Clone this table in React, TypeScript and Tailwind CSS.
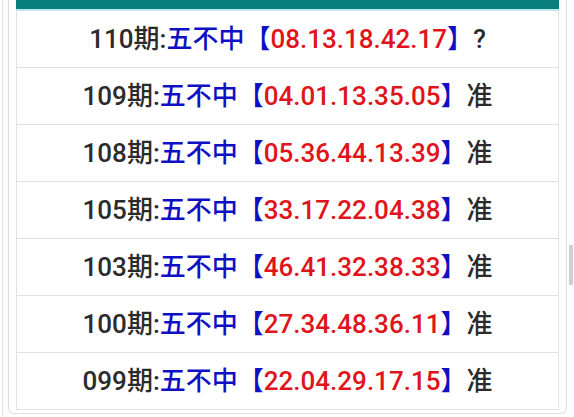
const rows = [
  { no: "110", nums: "08.13.18.42.17", res: "?" },
  { no: "109", nums: "04.01.13.35.05", res: "准" },
  { no: "108", nums: "05.36.44.13.39", res: "准" },
  { no: "105", nums: "33.17.22.04.38", res: "准" },
  { no: "103", nums: "46.41.32.38.33", res: "准" },
  { no: "100", nums: "27.34.48.36.11", res: "准" },
  { no: "099", nums: "22.04.29.17.15", res: "准" },
]

export default function App() {
  return (
    <div
      className="relative h-[417px] w-[574px] overflow-hidden bg-white"
      style={{ fontFamily: "Roboto, 'Noto Sans CJK SC', sans-serif" }}
    >
      <div className="flex h-full pl-[2px]">
        <div className="w-[6px] border-l border-[#e4e4e4]" />
        <div className="h-[414px] w-[559px] rounded-b-[6px] border-x border-b border-[#dedede] px-[7px]">
          <div className="h-[9px] bg-[#077f7c]" />
          <div className="h-[2px] bg-[#bfe8ec]" />
          <div className="border-x border-[#e2e2e2]">
            {rows.map((r) => (
              <div
                key={r.no}
                className="flex h-[57px] items-center justify-center border-b border-[#e0e0e0] pt-[1px] text-[26px] font-medium"
              >
                <span className="text-[#2b2b2b]">{r.no}期:</span>
                <span className="text-[#0f10c4]">五不中</span>
                <span className="text-[#0f10c4]">【</span>
                <span className="text-[#e0141a]">{r.nums}</span>
                <span className="text-[#0f10c4]">】</span>
                <span className="text-[#2b2b2b]">{r.res}</span>
              </div>
            ))}
          </div>
        </div>
        <div className="ml-[2px] w-[5px] pt-[245px]">
          <div className="h-[40px] w-[4px] bg-[#cfcfcf]" />
        </div>
      </div>
    </div>
  )
}
